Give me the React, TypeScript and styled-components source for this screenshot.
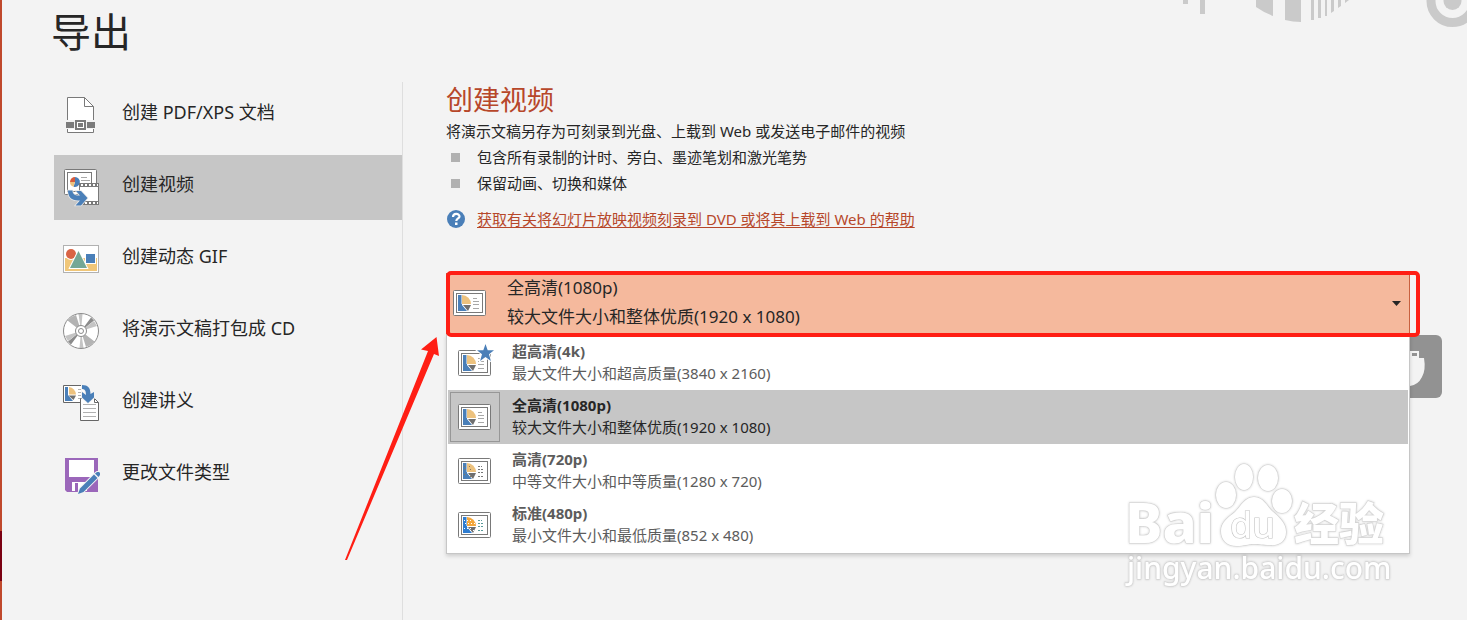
import React from 'react';
import styled, { createGlobalStyle } from 'styled-components';

const GlobalStyle = createGlobalStyle`
  * { box-sizing: border-box; }
  body {
    margin: 0;
    background: #f3f3f3;
    color: #262626;
    font-family: "Noto Sans", "Noto Sans CJK SC", sans-serif;
  }
  button { font: inherit; color: inherit; border: 0; margin: 0; padding: 0; background: none; text-align: left; cursor: pointer; }
  svg { display: block; overflow: visible; flex: none; }
`;

const Page = styled.div`
  position: relative;
  display: flex;
  flex-direction: column;
  min-height: 100vh;
  padding-left: 54px;
  overflow: hidden;
`;

const Edge = styled.span`
  position: absolute;
  left: 0;
  top: 0;
  bottom: 0;
  width: 2px;
  background: #c0492c;
  &::after {
    content: '';
    position: absolute;
    left: 0;
    bottom: 39px;
    width: 2px;
    height: 50px;
    background: #7a0012;
  }
`;

const BackdropArt = styled.svg`
  position: absolute;
  top: 0;
  right: 0;
`;

const PageTitle = styled.h1`
  margin: 0 0 0 -3px;
  height: 82px;
  font-size: 40px;
  line-height: 64px;
  font-weight: 400;
`;

const Columns = styled.div`
  display: flex;
  flex: 1;
`;

const Sidebar = styled.nav`
  display: flex;
  flex-direction: column;
  gap: 7px;
  width: 349px;
  flex: none;
  padding-top: 1px;
  border-right: 1px solid #dedede;
`;

const SidebarItem = styled.button<{ $active?: boolean }>`
  display: flex;
  align-items: center;
  gap: 22px;
  height: 65px;
  padding-left: 9px;
  background: ${(p) => (p.$active ? '#c6c6c6' : 'transparent')};
`;

const SidebarLabel = styled.span`
  padding-bottom: 8px;
  font-size: 18px;
  line-height: 26px;
`;

const Main = styled.main`
  flex: 1;
  min-width: 0;
  padding: 0 57px 0 43px;
`;

const Heading = styled.h2`
  margin: 0;
  font-size: 27px;
  line-height: 36px;
  font-weight: 400;
  color: #b7472a;
`;

const Intro = styled.p`
  margin: 0;
  font-size: 15px;
  line-height: 26px;
`;

const Bullets = styled.ul`
  margin: 0;
  padding: 0;
  list-style: none;
`;

const Bullet = styled.li`
  display: flex;
  align-items: center;
  gap: 17px;
  padding-left: 5px;
  font-size: 15px;
  line-height: 26px;
  &::before {
    content: '';
    width: 9px;
    height: 9px;
    background: #b1b1b1;
  }
`;

const HelpRow = styled.div`
  display: flex;
  align-items: center;
  gap: 12px;
  margin-top: 10px;
  padding-left: 1px;
`;

const HelpLink = styled.a`
  font-size: 15px;
  line-height: 26px;
  color: #b7472a;
  text-underline-offset: 2px;
`;

const QualityPicker = styled.div`
  position: relative;
  margin-top: 41px;
`;

const PickerButton = styled.button`
  display: flex;
  align-items: center;
  gap: 21px;
  width: 100%;
  height: 62px;
  padding: 0 8px 2px 6px;
  background: #f5b99d;
  border: 1px solid #c8603f;
  font-size: 17px;
  line-height: 29px;
`;

const PickerText = styled.span`
  display: flex;
  flex-direction: column;
  flex: 1;
  padding-bottom: 2px;
`;

const Highlight = styled.div`
  position: absolute;
  z-index: 3;
  top: -2px;
  left: 0;
  right: -10px;
  height: 66px;
  border: 4px solid #ff1e14;
  border-radius: 5px;
  pointer-events: none;
`;

const Options = styled.ul`
  position: absolute;
  z-index: 2;
  top: 61px;
  left: 0;
  right: 0;
  margin: 0;
  padding: 1px;
  list-style: none;
  background: #fff;
  border: 1px solid #c6c6c6;
  box-shadow: 0 2px 4px rgba(0, 0, 0, 0.16);
`;

const Option = styled.li<{ $selected?: boolean }>`
  display: flex;
  align-items: center;
  gap: 12px;
  height: 54px;
  padding-left: 2px;
  cursor: pointer;
  background: ${(p) => (p.$selected ? '#c6c6c6' : '#fff')};
  color: ${(p) => (p.$selected ? '#262626' : '#5c5c5c')};
`;

const OptionIcon = styled.span<{ $selected?: boolean }>`
  display: flex;
  align-items: center;
  width: 50px;
  height: 50px;
  padding-left: 7px;
  border: 1px solid ${(p) => (p.$selected ? '#979797' : 'transparent')};
`;

const OptionText = styled.span`
  display: flex;
  flex-direction: column;
  padding-bottom: 2px;
  font-size: 15px;
  line-height: 22px;
`;

const OptionName = styled.strong`
  font-weight: 700;
`;

const UsbTile = styled.svg`
  position: absolute;
  z-index: 1;
  top: 62px;
  right: -32px;
`;

const Watermark = styled.svg`
  position: absolute;
  z-index: 4;
  right: 74px;
  bottom: 24px;
  pointer-events: none;
  filter: drop-shadow(0 0 1px rgba(0, 0, 0, 0.2));
`;

const Pointer = styled.svg`
  position: absolute;
  z-index: 5;
  top: 64px;
  left: -101px;
  pointer-events: none;
`;

const MARK_FILL = { fill: '#fff', stroke: '#d3d3d3', strokeWidth: 1.2 };

function PdfIcon() {
  return (
    <svg width="37" height="37" viewBox="0 0 37 37" aria-hidden="true">
      <path d="M4.5 35.5V.5h17l9 9v26z" fill="#fff" stroke="#797979" />
      <path d="M21.5.5v9h9" fill="none" stroke="#797979" />
      <path d="M3 23h29v9H3z" fill="#f3f3f3" />
      <path d="M3 25h8v6H3zM24 25h8v6h-8z" fill="#7b7b7b" />
      <path d="M13 24h9v8h-9z" fill="#fff" stroke="#7b7b7b" strokeWidth="2" />
      <path d="M15 26h5v4h-5z" fill="#7b7b7b" />
    </svg>
  );
}

function VideoIcon() {
  return (
    <svg width="37" height="37" viewBox="0 0 37 37" aria-hidden="true">
      <rect x="1.5" y=".5" width="32" height="25" rx="1" fill="#fff" stroke="#797979" />
      <rect x="4.5" y="3.5" width="24" height="19" fill="#fff" stroke="#797979" />
      <path d="M18 8.500h6M18 11.500h9" stroke="#a8a8a8" />
      <path d="M12 8a5 5 0 1 1-1.500 9.800L12 13z" fill="#4a7fb8" />
      <path d="M12 13V8a5 5 0 0 0-5 5z" fill="#d65b3c" />
      <path d="M12 13H7a5 5 0 0 0 3.500 4.800z" fill="#edc27e" />
      <path d="M16 14h20v22H16z" fill="#797979" />
      <path d="M17 18h18v14H17z" fill="#fff" />
      <path d="M18 16h17M18 34h17" stroke="#fff" strokeWidth="2" strokeDasharray="2 2" />
      <path d="M5 21.500h4.500c0 3.500 2 5 6 5h1.500L13 22h5l6.500 7-6.500 7.500h-5.500l4.500-5h-2C8.500 31.500 5 28 5 21.500z" fill="#4a7fb8" stroke="#e8e8e8" strokeWidth="1.500" paintOrder="stroke" />
    </svg>
  );
}

function GifIcon() {
  return (
    <svg width="37" height="37" viewBox="0 0 37 37" aria-hidden="true">
      <rect x=".5" y="4.500" width="35" height="27" fill="#fff" stroke="#b1b1b1" />
      <path d="M2 17h32v13H2z" fill="#f0c678" />
      <circle cx="8" cy="13" r="5" fill="#d96445" stroke="#fff" strokeWidth="2" paintOrder="stroke" />
      <path d="M23 13h9v9h-9z" fill="#4a7fb8" stroke="#fff" strokeWidth="2" paintOrder="stroke" />
      <path d="M15.500 10 24 27H7z" fill="#74a795" stroke="#fff" strokeWidth="2" paintOrder="stroke" />
    </svg>
  );
}

function DiscIcon() {
  return (
    <svg width="37" height="37" viewBox="0 0 37 37" aria-hidden="true">
      <circle cx="18" cy="18" r="17.500" fill="#fff" />
      <path d="M18 18 4.500 7.500A17 17 0 0 1 13 2zM18 18l13.500 10.500A17 17 0 0 1 23 34z" fill="#b3b3b3" />
      <path d="M18 18 15.500 1h4zM18 18l2.500 17h-4zM18 18 31 8l3 5zM18 18 5 28l-3-5z" fill="#c4c4c4" />
      <path d="M18 18 28 4.500l3 3zM18 18 8 31.500l-3-3z" fill="#8b8b8b" />
      <circle cx="18" cy="18" r="17.500" fill="none" stroke="#8b8b8b" />
      <circle cx="18" cy="18" r="5.500" fill="#fff" stroke="#8b8b8b" />
      <circle cx="18" cy="18" r="2.500" fill="#fff" stroke="#8b8b8b" />
    </svg>
  );
}

function HandoutIcon() {
  return (
    <svg width="37" height="37" viewBox="0 0 37 37" aria-hidden="true">
      <path d="M.5.5h23v17H.5z" fill="#fff" stroke="#666" />
      <path d="M2 2h3v8l5 6H2z" fill="#4a7fb8" />
      <path d="M6 2a8 8 0 0 1 7 7.500H6z" fill="#edc27e" />
      <path d="M5.500 10.500H13L10.500 15z" fill="#6f6f6f" />
      <path d="M15 4.500h3M15 7.500h3M15 10.500h3M15 13.500h3" stroke="#b1b1b1" />
      <path d="M17.500 13.500h14l4 4v18h-18z" fill="#fff" stroke="#666" />
      <path d="M31.500 13.500v4h4" fill="none" stroke="#666" />
      <path d="M20 19.500h13M20 23.500h13M20 27.500h13M20 31.500h13" stroke="#b1b1b1" />
      <path d="M19 0c6 0 8.500 3 8.500 9L31 7v5.500L25 18l-6-5.500V7l4 3c0-4-1-6-4-6z" fill="#4a7fb8" stroke="#f3f3f3" strokeWidth="2" paintOrder="stroke" />
    </svg>
  );
}

function FileTypeIcon() {
  return (
    <svg width="37" height="37" viewBox="0 0 37 37" aria-hidden="true">
      <path d="M2 1h33v34H4l-2-2z" fill="#9b67ba" />
      <path d="M6 3h25v17H6zM9 25h15v9H9z" fill="#fff" />
      <path d="M12 26h3v8h-3z" fill="#9b67ba" />
      <path d="m15 37 2-5.500 14-14 3.500 3.500-14 14zM32 16.500l2-1.500h2l1 1v2l-1.500 2z" fill="#4a7fb8" stroke="#f3f3f3" strokeWidth="2" paintOrder="stroke" />
    </svg>
  );
}

type SlideVariant = 'plain' | 'star' | 'coarse' | 'dotted';

function SlideIcon({ variant = 'plain' }: { variant?: SlideVariant }) {
  const rough = variant === 'coarse' || variant === 'dotted';
  return (
    <svg width="33" height="26" viewBox="0 0 33 26" aria-hidden="true">
      <rect x=".5" y=".5" width="32" height="25" rx="1" fill="#fff" stroke="#797979" />
      <rect x="3.500" y="3.500" width="26" height="19" fill="#fff" stroke="#797979" />
      <path d="M5 5h4v10l5 6H5z" fill={variant === 'dotted' ? '#2e7cd0' : '#4a7fb8'} />
      <path d="M9 5a9 9 0 0 1 9 9H9z" fill={variant === 'dotted' ? '#f3a63b' : '#edc27e'} stroke="#fff" paintOrder="stroke" />
      <path d="M10 15h8l-3 6z" fill="#6f6f6f" stroke="#fff" paintOrder="stroke" />
      <path
        d="M20 8.500h4M20 11.500h6M20 14.500h6M20 18.500h6"
        stroke={variant === 'dotted' ? '#5a9a9a' : rough ? '#777' : '#a8a8a8'}
        strokeDasharray={rough ? '2 1' : undefined}
      />
      {rough && (
        <path
          d="M6 8.500h9M7 11.500h10M6 16.500h9M12 18.500h5"
          stroke={variant === 'dotted' ? '#fff' : '#8a7a5c'}
          strokeDasharray={variant === 'dotted' ? '1 2' : '1 4'}
        />
      )}
      {variant === 'star' && (
        <path
          d="m27.500-6 2.200 6.200h6.300l-5 4 1.900 6.800-5.400-4-5.400 4L24 4.200l-5-4h6.300z"
          fill="#4a7fb8"
          stroke="#fff"
          strokeWidth="2"
          paintOrder="stroke"
        />
      )}
    </svg>
  );
}

const exportTypes = [
  { label: '创建 PDF/XPS 文档', Icon: PdfIcon },
  { label: '创建视频', Icon: VideoIcon, active: true },
  { label: '创建动态 GIF', Icon: GifIcon },
  { label: '将演示文稿打包成 CD', Icon: DiscIcon },
  { label: '创建讲义', Icon: HandoutIcon },
  { label: '更改文件类型', Icon: FileTypeIcon },
];

const qualities: { name: string; detail: string; variant: SlideVariant; selected?: boolean }[] = [
  { name: '超高清(4k)', detail: '最大文件大小和超高质量(3840 x 2160)', variant: 'star' },
  { name: '全高清(1080p)', detail: '较大文件大小和整体优质(1920 x 1080)', variant: 'plain', selected: true },
  { name: '高清(720p)', detail: '中等文件大小和中等质量(1280 x 720)', variant: 'coarse' },
  { name: '标准(480p)', detail: '最小文件大小和最低质量(852 x 480)', variant: 'dotted' },
];

export default function App() {
  return (
    <Page>
      <GlobalStyle />
      <Edge />
      <BackdropArt width="290" height="30" viewBox="0 0 290 30" fill="#cacaca" aria-hidden="true">
        <path d="M6 0h5v4H6zM23 0h5v14h-5z" />
        <path d="M79 0h17v16q-10-4-17-9zM108 0h16v22q-8 0-16-2zM134 0h3v20h-3zM141 0h3v18h-3zM148 0h2v16h-2zM154 0h3v11l-3 2zM161 0h3v6l-3 2zM168 0h4l-4 3z" />
        <circle cx="275.500" cy="1" r="21.500" fill="none" stroke="#cacaca" strokeWidth="9" />
        <circle cx="275.500" cy="1" r="9" />
      </BackdropArt>
      <PageTitle>导出</PageTitle>
      <Columns>
        <Sidebar aria-label="导出">
          {exportTypes.map(({ label, Icon, active }) => (
            <SidebarItem key={label} type="button" $active={active} aria-current={active}>
              <Icon />
              <SidebarLabel>{label}</SidebarLabel>
            </SidebarItem>
          ))}
        </Sidebar>
        <Main>
          <Heading>创建视频</Heading>
          <Intro>将演示文稿另存为可刻录到光盘、上载到 Web 或发送电子邮件的视频</Intro>
          <Bullets>
            <Bullet>包含所有录制的计时、旁白、墨迹笔划和激光笔势</Bullet>
            <Bullet>保留动画、切换和媒体</Bullet>
          </Bullets>
          <HelpRow>
            <svg width="18" height="18" viewBox="0 0 18 18" aria-hidden="true">
              <circle cx="9" cy="9" r="9" fill="#4a7fb8" />
              <path d="M6 7c0-4 6.500-4 6.500-.5C12.500 8.500 9.300 8.500 9.300 11" fill="none" stroke="#fff" strokeWidth="2.200" />
              <path d="M8 12.500h2.500V15H8z" fill="#fff" />
            </svg>
            <HelpLink href="#help">获取有关将幻灯片放映视频刻录到 DVD 或将其上载到 Web 的帮助</HelpLink>
          </HelpRow>
          <QualityPicker>
            <PickerButton type="button" aria-haspopup="listbox" aria-expanded="true" aria-controls="quality-options">
              <SlideIcon />
              <PickerText>
                <span>全高清(1080p)</span>
                <span>较大文件大小和整体优质(1920 x 1080)</span>
              </PickerText>
              <svg width="9" height="5" viewBox="0 0 9 5" aria-hidden="true">
                <path d="M0 0h9L4.500 5z" fill="#262626" />
              </svg>
            </PickerButton>
            <UsbTile width="60" height="63" viewBox="0 0 60 63" aria-hidden="true">
              <rect width="60" height="63" rx="6" fill="#929292" />
              <path d="M12 16h25v7h5q2 12-2 19-4 8-12 9H12z" fill="#f3f3f3" />
              <path d="M30 18h5v3h-5z" fill="#929292" />
            </UsbTile>
            <Options id="quality-options" role="listbox" aria-label="视频质量">
              {qualities.map((q) => (
                <Option key={q.name} role="option" aria-selected={!!q.selected} $selected={q.selected}>
                  <OptionIcon $selected={q.selected}>
                    <SlideIcon variant={q.variant} />
                  </OptionIcon>
                  <OptionText>
                    <OptionName>{q.name}</OptionName>
                    <span>{q.detail}</span>
                  </OptionText>
                </Option>
              ))}
            </Options>
            <Highlight />
            <Pointer width="94" height="224" viewBox="0 0 94 224" aria-hidden="true">
              <path d="M91.500 0 76 12.500l7 1.500L0 223h2L89 17l5 2z" fill="#ff1e14" />
            </Pointer>
          </QualityPicker>
        </Main>
      </Columns>
      <Watermark width="270" height="136" viewBox="0 0 270 136" aria-hidden="true" {...MARK_FILL} paintOrder="stroke">
        <text x="2" y="83" fontFamily="Noto Sans" fontWeight="800" fontSize="56">Bai</text>
        <ellipse cx="103" cy="35" rx="10" ry="13" />
        <ellipse cx="121" cy="17" rx="9" ry="13" />
        <ellipse cx="145" cy="18" rx="10" ry="13" />
        <ellipse cx="159" cy="41" rx="10" ry="12" />
        <path d="M131 37c9 0 13 9 18 14 7 6 14 12 14 21 0 10-8 14-16 13-8 0-10-1-16-1s-10 2-17 2c-10 0-16-6-16-15s8-14 14-19c6-6 10-15 19-15z" />
        <text x="107" y="78" fontFamily="Noto Sans" fontWeight="500" fontSize="36" stroke="#c4c4c4">du</text>
        <text x="171" y="81" fontFamily="Noto Sans CJK SC" fontWeight="900" fontSize="45">经验</text>
        <text x="4" y="119" fontFamily="Noto Sans" fontWeight="500" fontSize="30" strokeWidth="1">jingyan.baidu.com</text>
      </Watermark>
    </Page>
  );
}
